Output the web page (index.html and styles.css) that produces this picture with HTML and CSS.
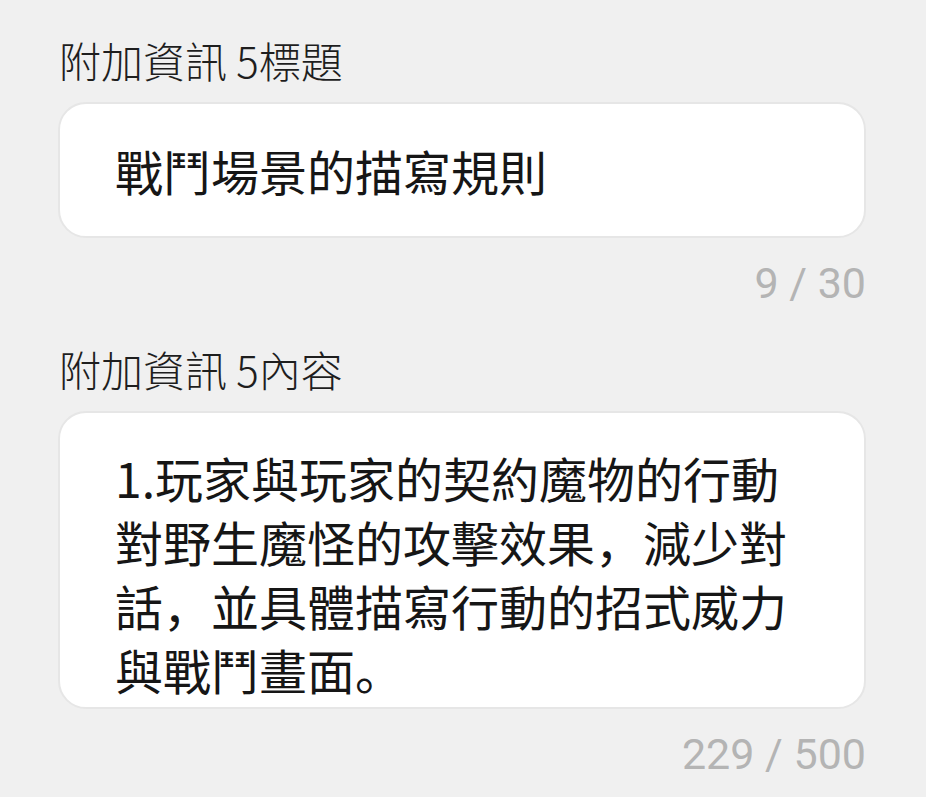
FILE: index.html
```html
<!DOCTYPE html>
<html lang="zh-CN">
<head>
<meta charset="utf-8">
<link rel="stylesheet" href="styles.css">
</head>
<body>
<main class="form">
  <section class="field">
    <div class="label">附加資訊 5標題</div>
    <div class="card card-title">戰鬥場景的描寫規則</div>
    <div class="counter">9 / 30</div>
  </section>
  <section class="field">
    <div class="label">附加資訊 5內容</div>
    <div class="card card-body">1.玩家與玩家的契約魔物的行動對野生魔怪的攻擊效果，減少對話，並具體描寫行動的招式威力與戰鬥畫面。</div>
    <div class="counter">229 / 500</div>
  </section>
</main>
</body>
</html>
```
FILE: styles.css
```css
html, body {
  margin: 0;
  padding: 0;
  background: #f0f0f0;
}
body {
  width: 926px;
  height: 797px;
  overflow: hidden;
}
.form {
  display: flex;
  flex-direction: column;
  padding: 32px 60px 0 58px;
}
.field {
  display: flex;
  flex-direction: column;
}
.field + .field {
  margin-top: 33px;
}
.label {
  font-family: "Noto Sans CJK SC", "Noto Sans", sans-serif;
  font-weight: 300;
  font-size: 42px;
  line-height: 56px;
  height: 56px;
  color: #1e1e1e;
  padding-left: 1px;
}
.card {
  margin-top: 14px;
  background: #ffffff;
  border: 2px solid #e6e6e6;
  border-radius: 28px;
  font-family: "Noto Sans CJK SC", "Noto Sans", sans-serif;
  font-weight: 400;
  font-size: 48px;
  line-height: 64px;
  color: #161616;
  padding: 0 56px 0 55px;
}
.card-title {
  height: 132px;
  display: flex;
  align-items: center;
}
.card-body {
  height: 262px;
  padding-top: 32px;
  overflow: hidden;
}
.counter {
  margin-top: 20px;
  font-family: Roboto, "Liberation Sans", sans-serif;
  font-size: 43px;
  line-height: 50px;
  height: 50px;
  color: #b4b4b4;
  text-align: right;
  padding-right: 0;
}
```
